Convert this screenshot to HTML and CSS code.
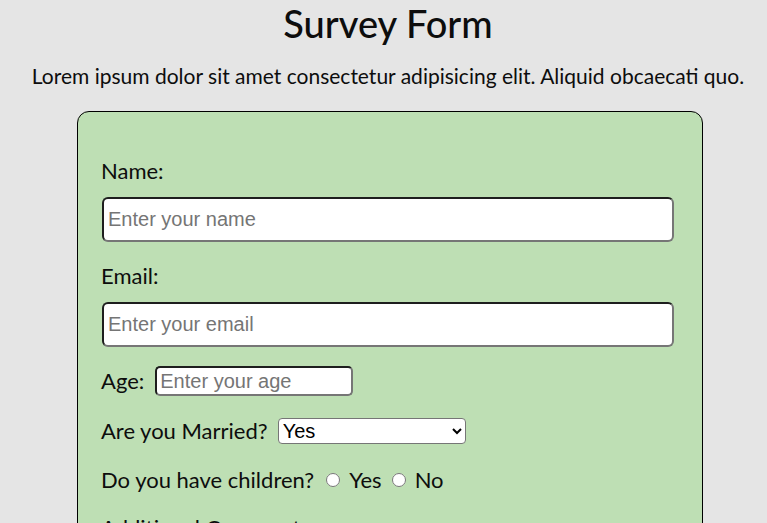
FILE: index.html
```html
<!DOCTYPE html>
<html lang="en">
<head>
<meta charset="utf-8">
<title>Survey Form</title>
<link rel="stylesheet" href="styles.css">
</head>
<body>
<header class="intro">
  <h1 class="title">Survey Form</h1>
  <p class="lead">Lorem ipsum dolor sit amet consectetur adipisicing elit. Aliquid obcaecati quo.</p>
</header>
<form class="survey">
  <div class="field">
    <label class="label" for="name">Name:</label>
    <input class="text-input" id="name" type="text" placeholder="Enter your name">
  </div>
  <div class="field">
    <label class="label" for="email">Email:</label>
    <input class="text-input" id="email" type="email" placeholder="Enter your email">
  </div>
  <div class="row row-age">
    <label class="label" for="age">Age:</label>
    <input class="age-input" id="age" type="number" placeholder="Enter your age">
  </div>
  <div class="row row-married">
    <label class="label" for="married">Are you Married?</label>
    <select class="select" id="married">
      <option>Yes</option>
      <option>No</option>
    </select>
  </div>
  <div class="row row-children">
    <span class="label">Do you have children?</span>
    <input class="radio radio-first" type="radio" name="kids" id="kids-yes">
    <label class="label" for="kids-yes">Yes</label>
    <input class="radio" type="radio" name="kids" id="kids-no">
    <label class="label" for="kids-no">No</label>
  </div>
  <div class="field">
    <label class="label" for="comments">Additional Comments:</label>
  </div>
</form>
</body>
</html>
```
FILE: styles.css
```css
html, body {
  margin: 0;
  padding: 0;
}
body {
  background: #e5e5e5;
  font-family: Lato, "Open Sans", sans-serif;
  color: #0d0d0d;
  overflow: hidden;
}
.intro {
  text-align: center;
  padding-left: 9px;
}
.title {
  margin: 0;
  padding-top: 2px;
  font-size: 38px;
  font-weight: 500;
  line-height: 42px;
}
.lead {
  margin: 20px 0 0;
  font-size: 21px;
  line-height: 24px;
}
.survey {
  width: 576px;
  margin: 23px 0 0 77px;
  padding: 47px 25px 20px 23px;
  background: #bedfb4;
  border: 1px solid #000;
  border-radius: 12px;
  display: flex;
  flex-direction: column;
}
.label {
  font-size: 22px;
  line-height: 24px;
}
.field {
  display: flex;
  flex-direction: column;
  align-items: flex-start;
  gap: 14px;
  margin-bottom: 22px;
}
.text-input {
  box-sizing: border-box;
  width: 572px;
  height: 45px;
  margin: 0 0 0 1px;
  padding: 0 4px;
  font-family: "Liberation Sans", Arial, sans-serif;
  font-size: 20px;
  border-width: 2px;
  border-style: solid;
  border-color: #1e1e1e #767676 #767676 #1e1e1e;
  border-radius: 6px;
  background: #fff;
}
.text-input::placeholder, .age-input::placeholder {
  color: #757575;
}
.row {
  display: flex;
  align-items: center;
  gap: 10px;
}
.row-age {
  margin-top: -3px;
  margin-bottom: 22px;
}
.age-input {
  box-sizing: border-box;
  width: 198px;
  height: 30px;
  margin: 0 0 0 1px;
  padding: 0 3px;
  font-family: "Liberation Sans", Arial, sans-serif;
  font-size: 20px;
  border-width: 2px;
  border-style: solid;
  border-color: #1e1e1e #767676 #767676 #1e1e1e;
  border-radius: 5px;
  background: #fff;
}
.row-married {
  margin-bottom: 24px;
}
.select {
  box-sizing: border-box;
  width: 188px;
  height: 26px;
  margin: 0;
  font-family: "Liberation Sans", Arial, sans-serif;
  font-size: 20px;
  color: #000;
  border: 1px solid #767676;
  border-radius: 4px;
  background: #fff;
}
.row-children {
  gap: 0;
  margin-bottom: 24px;
}
.radio {
  width: 14px;
  height: 14px;
  margin: 0 9px 0 10px;
}
.radio-first {
  margin-left: 12px;
}
```
